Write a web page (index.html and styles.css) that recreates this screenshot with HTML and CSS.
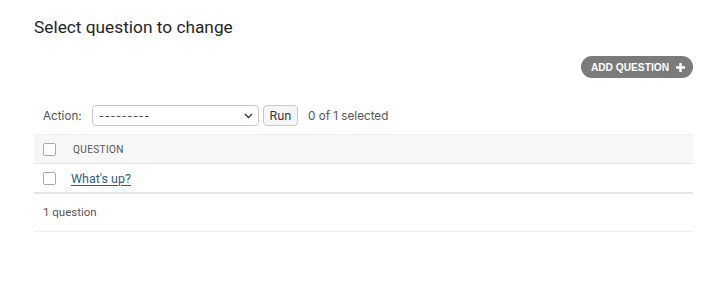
FILE: index.html
```html
<!DOCTYPE html>
<html>
<head>
<meta charset="utf-8">
<link rel="stylesheet" href="styles.css">
</head>
<body>
<div class="content">
  <h1 class="title">Select question to change</h1>
  <div class="tools">
    <a class="addlink" href="#">ADD QUESTION <svg width="11" height="11" viewBox="0 0 11 11"><path d="M5.5 1v9M1 5.5h9" stroke="#fff" stroke-width="2.4" stroke-linecap="butt"/></svg></a>
  </div>
  <div class="actions">
    <label class="action-label">Action:</label>
    <div class="select"><span class="dashes">---------</span><svg width="9" height="6" viewBox="0 0 9 6"><path d="M1 1l3.5 3.5L8 1" fill="none" stroke="#333" stroke-width="1.3"/></svg></div>
    <button class="run">Run</button>
    <span class="counter">0 of 1 selected</span>
  </div>
  <div class="table">
    <div class="row head">
      <span class="cb"></span>
      <span class="col-h">QUESTION</span>
    </div>
    <div class="row body">
      <span class="cb"></span>
      <a class="link" href="#">What's up?</a>
    </div>
  </div>
  <p class="paginator">1 question</p>
</div>
</body>
</html>
```
FILE: styles.css
```css
html, body { margin: 0; padding: 0; background: #fff; }
body { font-family: Roboto, "Liberation Sans", sans-serif; color: #333; }
.content { padding: 14px 34px 0 34px; width: 659px; }
.title { margin: 0; font-size: 17.3px; font-weight: 400; color: #262626; font-family: Roboto, sans-serif; line-height: 26px; }
.tools { display: flex; justify-content: flex-end; margin-top: 16px; }
.addlink { display: flex; align-items: center; gap: 6px; height: 22px; padding: 0 7px 0 10px; background: #7b7b7b; color: #fff; border-radius: 11px; font-size: 10.2px; font-weight: 700; text-decoration: none; letter-spacing: 0; font-family: "Liberation Sans", Roboto, sans-serif; }
.actions { display: flex; align-items: center; height: 21px; margin-top: 27px; padding-left: 9px; font-family: Inter, Roboto, sans-serif; font-size: 11.7px; color: #555; }
.action-label { width: 49px; }
.select { box-sizing: border-box; width: 167px; height: 21px; border: 1px solid #c9c9c9; border-radius: 4px; display: flex; align-items: center; justify-content: space-between; padding: 0 5px 0 6px; }
.dashes { font-size: 11px; letter-spacing: 0.6px; color: #444; }
.run { box-sizing: border-box; margin-left: 4px; height: 21px; width: 35px; padding: 0; border: 1px solid #c9c9c9; border-radius: 4px; background: #f6f6f6; font-family: Inter, Roboto, sans-serif; font-size: 12px; color: #333; }
.counter { margin-left: 10px; }
.table { margin-top: 8px; border-top: 1px solid #eee; }
.row { display: flex; align-items: center; height: 28px; }
.head { background: #f7f7f7; border-bottom: 1px solid #e6e6e6; }
.body { border-bottom: 2px solid #e6e6e6; }
.cb { box-sizing: border-box; width: 13px; height: 13px; border: 1px solid #a9a9a9; border-radius: 2px; background: #fff; margin-left: 9px; }
.col-h { margin-left: 17px; font-size: 10px; letter-spacing: 0.4px; color: #555; }
.link { margin-left: 15px; font-size: 12.5px; color: #2f5f7c; text-decoration: underline; text-underline-offset: 2px; }
.paginator { margin: 0; height: 37px; line-height: 37px; padding-left: 9px; font-size: 11.5px; color: #555; border-bottom: 1px solid #eee; }
```
